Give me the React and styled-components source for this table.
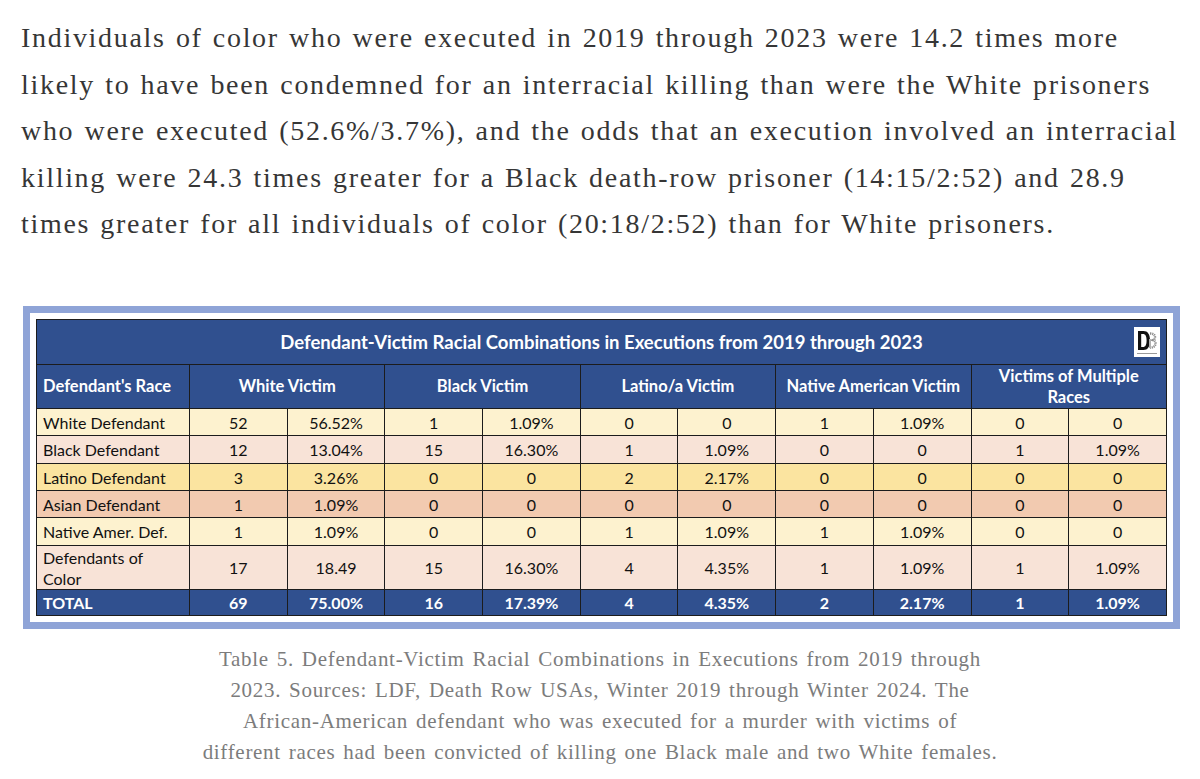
import styled, { createGlobalStyle } from "styled-components";

const GlobalStyle = createGlobalStyle`
  html, body {
    margin: 0;
    padding: 0;
    background: #ffffff;
  }
`;

const Page = styled.div`
  width: 1200px;
  height: 779px;
  overflow: hidden;
  background: #ffffff;
`;

const Lead = styled.p`
  margin: 0;
  padding: 15px 0 0 21px;
  height: 233px;
  font-family: "Liberation Serif", "Times New Roman", serif;
  font-size: 28px;
  letter-spacing: 1.7px;
  word-spacing: 1.5px;
  line-height: 46.5px;
  color: #363636;
  white-space: nowrap;
`;

const Frame = styled.div`
  margin: 58px 0 0 23px;
  width: 1131px;
  border: 7px solid #8fa4d7;
  padding: 6px;
  background: #ffffff;
`;

const Table = styled.table`
  width: 1131px;
  border-collapse: collapse;
  table-layout: fixed;
  font-family: Lato, "Open Sans", sans-serif;
  font-size: 16px;
  color: #111111;
`;

const TitleCell = styled.th`
  position: relative;
  height: 44px;
  padding: 0;
  background: #30508f;
  color: #ffffff;
  font-size: 18.5px;
  font-weight: 700;
  text-align: center;
  border: 1.5px solid #1c1c1c;
`;

const HeadCell = styled.th`
  height: 43px;
  padding: 0 6px;
  background: #30508f;
  color: #ffffff;
  font-size: 16.5px;
  font-weight: 700;
  line-height: 21px;
  text-align: ${(p) => (p.$left ? "left" : "center")};
  border: 1.5px solid #1c1c1c;
`;

const rowColors = {
  cream: "#fdf2cf",
  pink: "#f8e3d7",
  yellow: "#fbe4a0",
  peach: "#f2cab0",
  total: "#30508f",
};

const Row = styled.tr`
  height: ${(p) => p.$h}px;
  background: ${(p) => rowColors[p.$tone]};
  color: ${(p) => (p.$tone === "total" ? "#ffffff" : "#111111")};
  font-weight: ${(p) => (p.$tone === "total" ? 700 : 400)};
`;

const Cell = styled.td`
  padding: 0 6px;
  line-height: 21px;
  text-align: ${(p) => (p.$left ? "left" : "center")};
  border: 1.5px solid #1c1c1c;
`;

const Logo = styled.div`
  position: absolute;
  right: 6px;
  top: 7px;
  width: 26px;
  height: 30px;
  background: #ffffff;
  display: flex;
  flex-direction: column;
  align-items: center;
  justify-content: center;
`;

const Caption = styled.p`
  margin: 15px auto 0;
  width: 840px;
  text-align: center;
  font-family: "Liberation Serif", "Times New Roman", serif;
  font-size: 21px;
  letter-spacing: 0.7px;
  word-spacing: 2px;
  line-height: 31px;
  color: #7c7c7c;
  white-space: nowrap;
`;

const LEAD = [
  "Individuals of color who were executed in 2019 through 2023 were 14.2 times more",
  "likely to have been condemned for an interracial killing than were the White prisoners",
  "who were executed (52.6%/3.7%), and the odds that an execution involved an interracial",
  "killing were 24.3 times greater for a Black death-row prisoner (14:15/2:52) and 28.9",
  "times greater for all individuals of color (20:18/2:52) than for White prisoners.",
];

const CAPTION = [
  "Table 5. Defendant-Victim Racial Combinations in Executions from 2019 through",
  "2023. Sources: LDF, Death Row USAs, Winter 2019 through Winter 2024. The",
  "African-American defendant who was executed for a murder with victims of",
  "different races had been convicted of killing one Black male and two White females.",
];

const HEADERS = [
  ["White Victim"],
  ["Black Victim"],
  ["Latino/a Victim"],
  ["Native American Victim"],
  ["Victims of Multiple", "Races"],
];

const ROWS = [
  { label: "White Defendant", tone: "cream", h: 27, cells: ["52", "56.52%", "1", "1.09%", "0", "0", "1", "1.09%", "0", "0"] },
  { label: "Black Defendant", tone: "pink", h: 28, cells: ["12", "13.04%", "15", "16.30%", "1", "1.09%", "0", "0", "1", "1.09%"] },
  { label: "Latino Defendant", tone: "yellow", h: 27, cells: ["3", "3.26%", "0", "0", "2", "2.17%", "0", "0", "0", "0"] },
  { label: "Asian Defendant", tone: "peach", h: 27, cells: ["1", "1.09%", "0", "0", "0", "0", "0", "0", "0", "0"] },
  { label: "Native Amer. Def.", tone: "cream", h: 28, cells: ["1", "1.09%", "0", "0", "1", "1.09%", "1", "1.09%", "0", "0"] },
  { label: "Defendants of Color", tone: "pink", h: 44, cells: ["17", "18.49", "15", "16.30%", "4", "4.35%", "1", "1.09%", "1", "1.09%"] },
  { label: "TOTAL", tone: "total", h: 26, cells: ["69", "75.00%", "16", "17.39%", "4", "4.35%", "2", "2.17%", "1", "1.09%"] },
];

const DppLogo = () => (
  <Logo>
    <svg width="22" height="22" viewBox="0 0 22 22">
      <path d="M2 1h5.5c4.2 0 6.5 3.2 6.5 9.5S11.7 20 7.5 20H2z M5.2 4v13h2c2 0 3.4-2 3.4-6.5S9.2 4 7.2 4z" fill="#111" fillRule="evenodd" />
      <path d="M14 3.5c3 0 5 1.3 5 3.6 0 1.5-.8 2.5-2 3 1.5.5 2.5 1.6 2.5 3.4 0 2.6-2.2 4.2-5.5 4.2" fill="none" stroke="#8a8a8a" strokeWidth="2.4" strokeDasharray="1.2 0.8" />
      <rect x="13" y="9" width="2" height="9" fill="#b0b0b0" />
    </svg>
    <svg width="22" height="3" viewBox="0 0 22 3">
      <rect x="1" y="1" width="20" height="1" fill="#9a9a9a" />
    </svg>
  </Logo>
);

const Lines = ({ lines }) =>
  lines.map((line, i) => (
    <span key={i}>
      {line}
      {i < lines.length - 1 && <br />}
    </span>
  ));

export default function App() {
  return (
    <Page>
      <GlobalStyle />
      <Lead>
        <Lines lines={LEAD} />
      </Lead>
      <Frame>
        <Table>
          <colgroup>
            <col style={{ width: 153 }} />
            {Array.from({ length: 10 }).map((_, i) => (
              <col key={i} />
            ))}
          </colgroup>
          <thead>
            <tr>
              <TitleCell colSpan={11}>
                Defendant-Victim Racial Combinations in Executions from 2019 through 2023
                <DppLogo />
              </TitleCell>
            </tr>
            <tr>
              <HeadCell $left>Defendant's Race</HeadCell>
              {HEADERS.map((h) => (
                <HeadCell key={h[0]} colSpan={2}>
                  <Lines lines={h} />
                </HeadCell>
              ))}
            </tr>
          </thead>
          <tbody>
            {ROWS.map((r) => (
              <Row key={r.label} $tone={r.tone} $h={r.h}>
                <Cell $left>{r.label}</Cell>
                {r.cells.map((c, i) => (
                  <Cell key={i}>{c}</Cell>
                ))}
              </Row>
            ))}
          </tbody>
        </Table>
      </Frame>
      <Caption>
        <Lines lines={CAPTION} />
      </Caption>
    </Page>
  );
}
